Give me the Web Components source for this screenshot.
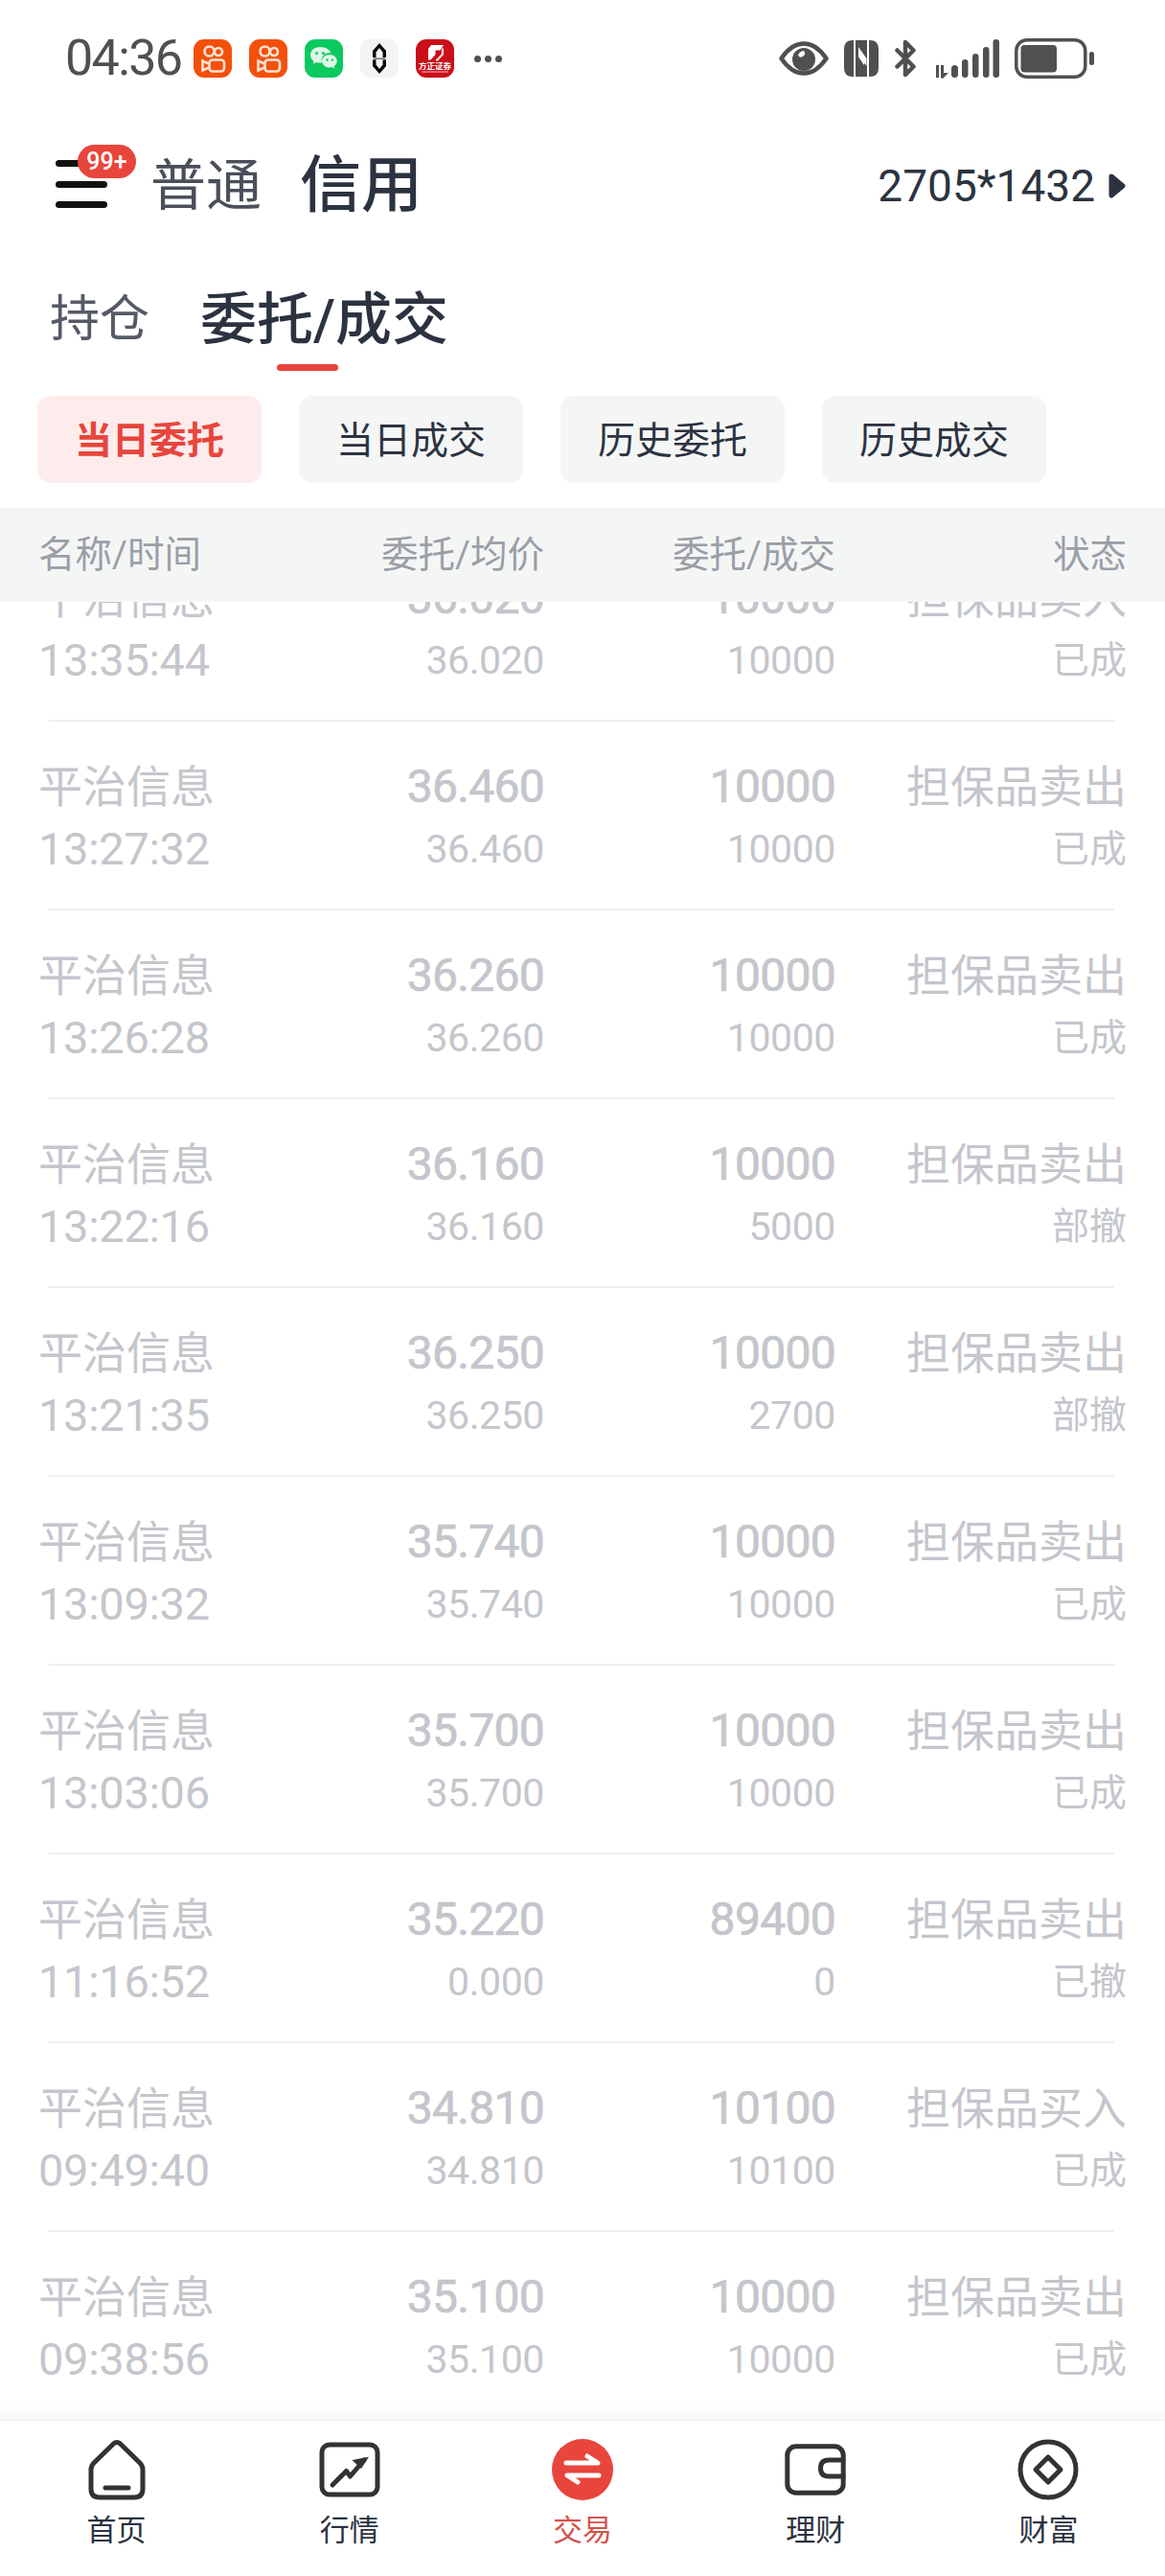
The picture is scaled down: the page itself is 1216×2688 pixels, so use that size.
<!DOCTYPE html>
<html lang="zh-CN">
<head>
<meta charset="utf-8">
<title>委托/成交</title>
<style>
    html, body { margin: 0; padding: 0; background: #fff; }
    body { font-family: Roboto, "Noto Sans CJK SC", sans-serif; color: #2c3340; }
</style>
</head>
<body>
<app-shell>
    <status-bar></status-bar>
    <app-header></app-header>
    <trade-tabs></trade-tabs>
    <filter-chips></filter-chips>
    <order-table></order-table>
    <nav-bar></nav-bar>
</app-shell>

<script>
const FONT = 'Roboto, "Noto Sans CJK SC", sans-serif';

class AppShell extends HTMLElement {
    constructor() {
        super();
        this.attachShadow({ mode: 'open' });
        this.shadowRoot.innerHTML = `
            <style>
                :host { display: flex; flex-direction: column; height: 2688px; overflow: hidden; background: #fff; font-family: ${FONT}; }
            </style>
            <slot></slot>
        `;
    }
}

class StatusBar extends HTMLElement {
    constructor() {
        super();
        this.attachShadow({ mode: 'open' });
        this.shadowRoot.innerHTML = `
            <style>
                :host { display: flex; align-items: center; height: 122px; padding: 0 74px 0 68px; box-sizing: border-box; flex: none; }
                .time { font-size: 52px; line-height: 52px; letter-spacing: -1.6px; color: #505050; width: 134px; font-weight: 400; }
                .apps { display: flex; gap: 18px; align-items: center; }
                .apps svg { display: block; width: 40px; height: 40px; }
                .dots { display: flex; gap: 4px; margin-left: 21px; }
                .dots i { width: 7px; height: 7px; border-radius: 50%; background: #505050; }
                .right { display: flex; align-items: center; margin-left: auto; }
                .right svg { display: block; }
            </style>
            <span class="time">04:36</span>
            <div class="apps">
                <svg viewBox="0 0 40 40"><rect width="40" height="40" rx="11" fill="#f4500c"/><g fill="none" stroke="#fde3d2" stroke-width="2.6"><circle cx="16.5" cy="12.5" r="5"/><circle cx="26" cy="13" r="4"/><rect x="16.5" y="21.5" width="15.5" height="12" rx="3.5"/><path d="M16 25.500 9.500 22.500V32.500L16 29.500"/></g></svg>
                <svg viewBox="0 0 40 40"><rect width="40" height="40" rx="11" fill="#f4500c"/><g fill="none" stroke="#fde3d2" stroke-width="2.6"><circle cx="16.5" cy="12.5" r="5"/><circle cx="26" cy="13" r="4"/><rect x="16.500" y="21.5" width="15.5" height="12" rx="3.5"/><path d="M16 25.500 9.500 22.500V32.500L16 29.500"/></g></svg>
                <svg viewBox="0 0 40 40"><rect width="40" height="40" rx="11" fill="#0cc95f"/><path d="M16 8C10 8 6 12 6 16.500c0 2.700 1.400 4.800 3.500 6.300l-.8 3 3.400-1.800c1.200.4 2.500.6 3.900.6 1 0 1.500-.1 2-.2-.3-.9-.4-1.700-.4-2.500 0-4.600 4.200-7.800 9-7.800h.8C26.400 10.800 21.600 8 16 8z" fill="#dff8e6"/><path d="M26 16c-4.700 0-8 3-8 6.700 0 3.700 3.300 6.700 8 6.700.9 0 1.800-.1 2.700-.4l2.700 1.500-.7-2.500c1.900-1.300 3-3.200 3-5.300C33.700 19 30.600 16 26 16z" fill="#dff8e6"/><circle cx="12.500" cy="14.500" r="1.500" fill="#0cc95f"/><circle cx="19.500" cy="14.500" r="1.500" fill="#0cc95f"/><circle cx="23.500" cy="21.500" r="1.200" fill="#0cc95f"/><circle cx="29" cy="21.500" r="1.200" fill="#0cc95f"/></svg>
                <svg viewBox="0 0 40 40"><rect width="40" height="40" rx="11" fill="#f4f4f4"/><path d="M20 4 27 12V28L20 36 13 28V12z" fill="#0a0a0a"/><path d="M20 9 23.500 13.500V26.500L20 31 16.500 26.500V13.500z" fill="#f4f4f4"/><rect x="12" y="19" width="16" height="2.400" fill="#f4f4f4"/><rect x="14" y="19.600" width="12" height="1.200" fill="#555"/></svg>
                <svg viewBox="0 0 40 40"><rect width="40" height="40" rx="11" fill="#cb0f18"/><path d="M16 6H29L25.500 11.500H20.500V16L15.500 21.500H13V10z" fill="#fff"/><path d="M21 21.500H22.500L28 15.500V9.500" fill="none" stroke="#fff" stroke-width="2.200" opacity=".85"/><text x="20" y="31" text-anchor="middle" font-size="8.500" font-weight="700" fill="#fff" font-family="'Noto Sans CJK SC', sans-serif">方正证券</text><rect x="6" y="33.500" width="28" height="1" fill="#f6b9bb"/></svg>
            </div>
            <div class="dots"><i></i><i></i><i></i></div>
            <div class="right">
                <svg width="52" height="36" viewBox="0 0 52 36" style="margin-right:16px"><path d="M2.500 18C10 7 18 2.500 26 2.500S42 7 49.500 18C42 29 34 33.500 26 33.500S10 29 2.500 18z" fill="none" stroke="#505050" stroke-width="4.500" stroke-linejoin="round"/><circle cx="26" cy="19" r="12" fill="#505050"/><path d="M20 15a3.500 3.500 0 0 0 6-5 7 7 0 0 0-6 5z" fill="#fff"/></svg>
                <svg width="36" height="38" viewBox="0 0 36 38" style="margin-right:16px"><path d="M9 0H10V38H9Q0 38 0 29V9Q0 0 9 0z" fill="#505050"/><path d="M27 0H26V38H27Q36 38 36 29V9Q36 0 27 0z" fill="#505050"/><path d="M12 0H24V25L15 12V38H12z" fill="#505050"/><path d="M24 38H12V13L21 26V0H24z" fill="#505050"/><path d="M15 7 23.500 19V27L15 15z" fill="#fff"/></svg>
                <svg width="24" height="40" viewBox="0 0 24 40" style="margin-right:15px"><path d="M3.500 11.500 20.500 28.500 12 37V3L20.500 11.500 3.500 28.500" fill="none" stroke="#505050" stroke-width="4.500" stroke-linejoin="round" stroke-linecap="round"/></svg>
                <svg width="71" height="41" viewBox="0 0 71 41" style="margin-right:16px"><g fill="#505050"><path d="M0 33 5 27V40H8V27H5z"/><path d="M10 27H13V35L18 35 12 41 10 40z"/><rect x="21" y="27" width="7" height="13" rx="3.500"/><rect x="32" y="21" width="6.500" height="19" rx="3.200"/><rect x="43" y="15" width="6.500" height="25" rx="3.200"/><rect x="54" y="8" width="6.500" height="32" rx="3.200"/><rect x="64.500" y="0" width="6.500" height="40" rx="3.200"/></g></svg>
                <svg width="83" height="42" viewBox="0 0 83 42"><rect x="1.800" y="1.800" width="72" height="38.400" rx="11" fill="none" stroke="#505050" stroke-width="3.500"/><rect x="6.500" y="7" width="37.500" height="28.500" rx="4" fill="#505050"/><rect x="78" y="14" width="5" height="14" rx="2.500" fill="#505050"/></svg>
            </div>
        `;
    }
}

class AppHeader extends HTMLElement {
    constructor() {
        super();
        this.attachShadow({ mode: 'open' });
        this.shadowRoot.innerHTML = `
            <style>
                :host { display: flex; align-items: center; height: 140px; padding: 3px 41px 0 58px; box-sizing: border-box; flex: none; }
                .menu { position: relative; width: 54px; height: 50px; margin: -3px 45px 0 0; flex: none; display: flex; flex-direction: column; justify-content: space-between; }
                .menu i { display: block; height: 7px; border-radius: 4px; background: #111; }
                .badge { position: absolute; left: 23px; top: -16px; width: 61px; height: 35px; border-radius: 18px; background: #e8453c; color: #fff; font-size: 25px; font-weight: 500; line-height: 35px; text-align: center; }
                .plain { font-size: 58px; line-height: 70px; color: #4a4f5a; margin-right: 40px; }
                .strong { font-size: 64px; line-height: 70px; font-weight: 500; color: #2c3340; }
                .size { margin-left: auto; font-size: 46px; line-height: 60px; color: #2c3340; }
                svg { margin-left: 14px; display: block; }
            </style>
            <div class="menu"><i></i><i></i><i></i><span class="badge">99+</span></div>
            <span class="plain">普通</span>
            <span class="strong">信用</span>
            <span class="size">2705*1432</span>
            <svg width="18" height="26" viewBox="0 0 18 26"><path d="M3 3 15 13 3 23z" fill="#2c3340" stroke="#2c3340" stroke-width="5" stroke-linejoin="round"/></svg>
        `;
    }
}

class TradeTabs extends HTMLElement {
    constructor() {
        super();
        this.attachShadow({ mode: 'open' });
        this.shadowRoot.innerHTML = `
            <style>
                :host { display: flex; align-items: flex-start; gap: 53px; padding: 37px 0 0 52px; height: 151px; box-sizing: border-box; flex: none; }
                .tab { font-size: 52px; line-height: 70px; color: #555a66; }
                .on { position: relative; font-size: 59px; font-weight: 500; color: #2c3340; }
                .on::after { content: ''; position: absolute; left: 80px; top: 81px; width: 64px; height: 7px; border-radius: 4px; background: #e8453c; }
            </style>
            <span class="tab">持仓</span>
            <span class="tab on">委托/成交</span>
        `;
    }
}

class FilterChips extends HTMLElement {
    constructor() {
        super();
        this.attachShadow({ mode: 'open' });
        const chips = ['当日委托', '当日成交', '历史委托', '历史成交'];
        this.shadowRoot.innerHTML = `
            <style>
                :host { display: flex; gap: 39px; padding: 0 39px; height: 117px; box-sizing: border-box; flex: none; }
                span { width: 234px; height: 91px; border-radius: 14px; background: #f4f6f6; color: #2c3340; font-size: 39px; line-height: 94px; text-align: center; }
                .on { background: #feecec; color: #e8453c; font-weight: 700; }
            </style>
            ${chips.map((c, i) => `<span class="${i === 0 ? 'on' : ''}">${c}</span>`).join('')}
        `;
    }
}

class OrderRow extends HTMLElement {
    set data(d) {
        this.attachShadow({ mode: 'open' });
        this.shadowRoot.innerHTML = `
            <style>
                :host { display: block; height: 197px; flex: none; }
                .cells { display: grid; grid-template-columns: 181px 347px 304px 304px; grid-auto-rows: 60px; row-gap: 5px; height: 195px; padding: 38px 0 0 40px; box-sizing: border-box; color: #c4c6cc; text-align: right; }
                .cells div { line-height: 60px; white-space: nowrap; }
                .name { font-size: 46px; text-align: left; }
                .time { font-size: 47px; letter-spacing: -.3px; text-align: left; }
                .big { font-size: 48px; letter-spacing: -.7px; -webkit-text-stroke: .7px #c4c6cc; }
                .small { font-size: 41px; letter-spacing: -.4px; }
                .type { font-size: 46px; }
                .state { font-size: 39px; }
                hr { margin: 0 53px 0 51px; height: 2px; border: 0; background: #eeeff1; }
            </style>
            <div class="cells">
                <div class="name">平治信息</div>
                <div class="big">${d[1]}</div>
                <div class="big">${d[3]}</div>
                <div class="type">${d[5]}</div>
                <div class="time">${d[0]}</div>
                <div class="small">${d[2]}</div>
                <div class="small">${d[4]}</div>
                <div class="state">${d[6]}</div>
            </div>
            <hr>
        `;
    }
}

class OrderTable extends HTMLElement {
    constructor() {
        super();
        this.attachShadow({ mode: 'open' });
        this.shadowRoot.innerHTML = `
            <style>
                :host { display: flex; flex-direction: column; flex: 1; min-height: 0; }
                .head { display: grid; grid-template-columns: 181px 347px 304px 304px; height: 98px; padding-left: 40px; background: #f4f6f6; color: #9b9ea6; font-size: 38.500px; line-height: 98px; text-align: right; flex: none; position: relative; z-index: 1; }
                .head span:first-child { text-align: left; white-space: nowrap; }
                .list { flex: 1; min-height: 0; overflow: hidden; }
                .rows { display: flex; flex-direction: column; margin-top: -72px; }
            </style>
            <div class="head"><span>名称/时间</span><span>委托/均价</span><span>委托/成交</span><span>状态</span></div>
            <div class="list"><div class="rows"></div></div>
        `;
        // time, price, avg, qty, filled, type, state
        const orders = [
            ['13:35:44', '36.020', '36.020', '10000', '10000', '担保品卖入', '已成'],
            ['13:27:32', '36.460', '36.460', '10000', '10000', '担保品卖出', '已成'],
            ['13:26:28', '36.260', '36.260', '10000', '10000', '担保品卖出', '已成'],
            ['13:22:16', '36.160', '36.160', '10000', '5000', '担保品卖出', '部撤'],
            ['13:21:35', '36.250', '36.250', '10000', '2700', '担保品卖出', '部撤'],
            ['13:09:32', '35.740', '35.740', '10000', '10000', '担保品卖出', '已成'],
            ['13:03:06', '35.700', '35.700', '10000', '10000', '担保品卖出', '已成'],
            ['11:16:52', '35.220', '0.000', '89400', '0', '担保品卖出', '已撤'],
            ['09:49:40', '34.810', '34.810', '10100', '10100', '担保品买入', '已成'],
            ['09:38:56', '35.100', '35.100', '10000', '10000', '担保品卖出', '已成'],
        ];
        const rows = this.shadowRoot.querySelector('.rows');
        orders.forEach(o => {
            const row = document.createElement('order-row');
            row.data = o;
            rows.appendChild(row);
        });
    }
}

class NavBar extends HTMLElement {
    constructor() {
        super();
        this.attachShadow({ mode: 'open' });
        const s = 'fill="none" stroke="#333" stroke-width="5" stroke-linecap="round" stroke-linejoin="round"';
        const items = [
            ['首页', `<svg width="60" height="64" viewBox="0 0 60 64"><path d="M26.500 5 6 25Q3 28 3 32V52Q3 61 12 61H48Q57 61 57 52V32Q57 28 54 25L33.500 5Q30 2 26.500 5z" ${s}/><path d="M18 51H42" ${s}/></svg>`],
            ['行情', `<svg width="64" height="64" viewBox="0 0 64 64"><rect x="3" y="6" width="58" height="52" rx="8" ${s}/><path d="M14 48 28.500 33.500 32.500 39 47 22" ${s}/><path d="M34.500 22 52 18.700 44 31z" fill="#333"/></svg>`],
            ['交易', `<svg width="64" height="64" viewBox="0 0 64 64"><circle cx="32" cy="32" r="32" fill="#e8453c"/><path d="M15 25H48L37 18M49 38H16L27 45" fill="none" stroke="#fff" stroke-width="5" stroke-linecap="round" stroke-linejoin="round"/></svg>`],
            ['理财', `<svg width="64" height="64" viewBox="0 0 64 64"><rect x="2.800" y="7.800" width="58.400" height="48.400" rx="9" ${s}/><path d="M61 22H46Q37.500 22 37.500 30.500 37.500 39 46 39H61" ${s}/></svg>`],
            ['财富', `<svg width="64" height="64" viewBox="0 0 64 64"><circle cx="32" cy="32" r="29" ${s}/><path d="M32 19 45 32 32 45 19 32z" ${s}/></svg>`],
        ];
        this.shadowRoot.innerHTML = `
            <style>
                :host { display: grid; grid-template-columns: repeat(5, 1fr); height: 163px; padding-top: 19px; box-sizing: border-box; background: #fff; border-top: 1px solid #eeeeee; flex: none; position: relative; z-index: 2; }
                :host::before { content: ''; position: absolute; left: 0; right: 0; top: -16px; height: 15px; background: linear-gradient(#ffffff, #f8f8f8); }
                .item { display: flex; flex-direction: column; align-items: center; color: #2c3340; font-size: 31px; line-height: 44px; }
                .item svg { display: block; margin-bottom: 10px; }
                .on { color: #d2544c; }
            </style>
            ${items.map((it, i) => `<div class="item ${i === 2 ? 'on' : ''}">${it[1]}<span>${it[0]}</span></div>`).join('')}
        `;
    }
}

customElements.define('app-shell', AppShell);
customElements.define('status-bar', StatusBar);
customElements.define('app-header', AppHeader);
customElements.define('trade-tabs', TradeTabs);
customElements.define('filter-chips', FilterChips);
customElements.define('order-row', OrderRow);
customElements.define('order-table', OrderTable);
customElements.define('nav-bar', NavBar);
</script>
</body>
</html>
